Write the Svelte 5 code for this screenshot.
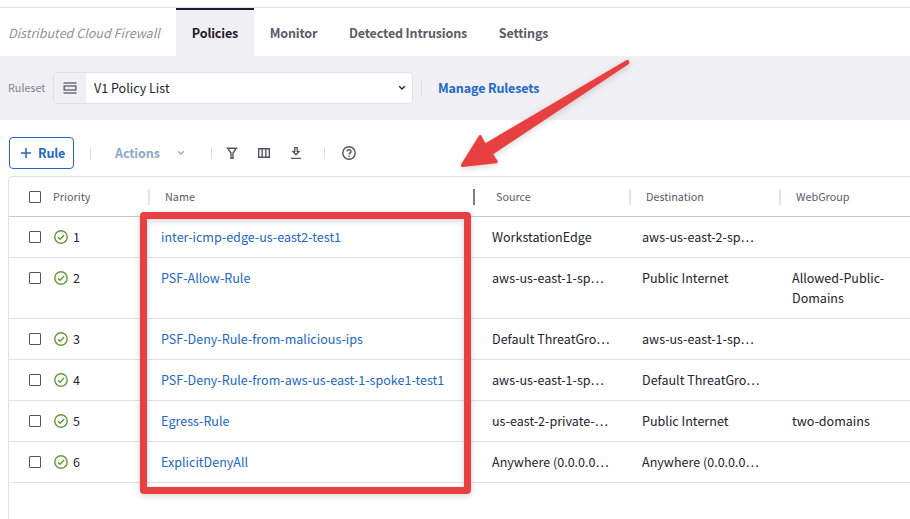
<script>
  const tabs = [
    { label: 'Policies', active: true, width: 78 },
    { label: 'Monitor', width: 79 },
    { label: 'Detected Intrusions', width: 150 },
    { label: 'Settings', width: 81 }
  ];
  const columns = ['Name', 'Source', 'Destination', 'WebGroup'];
  const rules = [
    { name: 'inter-icmp-edge-us-east2-test1', source: 'WorkstationEdge', destination: 'aws-us-east-2-sp…', group: '' },
    { name: 'PSF-Allow-Rule', source: 'aws-us-east-1-sp…', destination: 'Public Internet', group: 'Allowed-Public-Domains' },
    { name: 'PSF-Deny-Rule-from-malicious-ips', source: 'Default ThreatGro…', destination: 'aws-us-east-1-sp…', group: '' },
    { name: 'PSF-Deny-Rule-from-aws-us-east-1-spoke1-test1', source: 'aws-us-east-1-sp…', destination: 'Default ThreatGro…', group: '' },
    { name: 'Egress-Rule', source: 'us-east-2-private-…', destination: 'Public Internet', group: 'two-domains' },
    { name: 'ExplicitDenyAll', source: 'Anywhere (0.0.0.0…', destination: 'Anywhere (0.0.0.0…', group: '' }
  ];
</script>

<div class="page">
  <nav class="tabs">
    <em class="product">Distributed Cloud Firewall</em>
    {#each tabs as tab}
      <div class="tab" class:active={tab.active} style="width: {tab.width}px"><span>{tab.label}</span></div>
    {/each}
  </nav>

  <section class="ruleset">
    <span class="label">Ruleset</span>
    <div class="select">
      <div class="prefix">
        <svg width="14" height="12" viewBox="0 0 14 12" fill="none" stroke="#6d6c73" stroke-width="1.3">
          <path d="M.5 1h13M.5 11h13" />
          <path d="M1.2 3.9h11.6v4.2H1.2z" stroke-width="1.5" />
        </svg>
      </div>
      <span class="value">V1 Policy List</span>
      <svg class="caret" width="8" height="6" viewBox="0 0 8 6" fill="none" stroke="#24222e" stroke-width="1.4"><path d="M1.2 1.3 4 4l2.8-2.7" /></svg>
    </div>
    <i class="rule-line"></i>
    <b class="manage">Manage Rulesets</b>
  </section>

  <section class="toolbar">
    <div class="add">
      <svg width="10" height="10" viewBox="0 0 10 10" stroke="#2167c5" stroke-width="1.5"><path d="M0 5h10M5 0v10" /></svg>
      <b>Rule</b>
    </div>
    <i class="bar b1"></i>
    <b class="actions">Actions</b>
    <svg class="down" width="8" height="6" viewBox="0 0 8 6" fill="none" stroke="#8fa8c4" stroke-width="1.3"><path d="M1.2 1.3 4 4l2.8-2.7" /></svg>
    <i class="bar b2"></i>
    <svg class="filter" width="12" height="12" viewBox="0 0 12 12" fill="none" stroke="#55545e" stroke-width="1.4"><path d="M1.6 1.2h8.8L7 6v5.2H5V6z" /></svg>
    <svg class="cols" width="12" height="10" viewBox="0 0 12 10" fill="none" stroke="#55545e" stroke-width="1.4"><path d="M.7.7h10.6v8.6H.7zM4.2.7v8.6M7.8.7v8.6" /></svg>
    <svg class="download" width="10" height="12" viewBox="0 0 10 12" fill="none" stroke="#55545e" stroke-width="1.3"><path d="M0 11.3h10M3.8.7h2.4v3.8h1.9L5 7.7 1.9 4.5h1.9z" /></svg>
    <i class="bar b3"></i>
    <svg class="help" width="14" height="14" viewBox="0 0 14 14" fill="none" stroke="#55545e" stroke-width="1.4"><circle cx="7" cy="7" r="6.2" /><path d="M5 5.6c0-1.1.8-1.9 2-1.9s2 .8 2 1.8C9 6.8 7 6.9 7 8.5M7 9.7v1.3" /></svg>
  </section>

  <section class="table">
    <div class="row head">
      <div class="priority"><i class="box"></i><span class="title">Priority</span></div>
      {#each columns as column, i}
        <div class="cell c{i}"><span class="title">{column}</span></div>
      {/each}
    </div>
    {#each rules as rule, i}
      <div class="row">
        <div class="priority">
          <i class="box"></i>
          <svg width="14" height="14" viewBox="0 0 14 14" fill="none" stroke="#649a38" stroke-width="1.4"><circle cx="7" cy="7" r="6.2" /><path d="m4 7.2 2.1 2.1 4-4.2" /></svg>
          <span>{i + 1}</span>
        </div>
        <div class="cell c0 link">{rule.name}</div>
        <div class="cell c1">{rule.source}</div>
        <div class="cell c2">{rule.destination}</div>
        <div class="cell c3">{rule.group}</div>
      </div>
    {/each}
  </section>

  <div class="highlight"></div>
  <svg class="arrow" width="190" height="130" viewBox="450 50 190 130">
    <path d="M462.3 165.4 480.2 136.6 484.8 145.2 627.4 61.4 628 62.7 491.2 153.7 496.3 161.7z" />
  </svg>
</div>

<style>
  :global(body) { margin: 0; background: #fff; }
  .page {
    position: relative;
    box-sizing: border-box;
    width: 910px;
    height: 519px;
    padding-top: 7px;
    overflow: hidden;
    display: flex;
    flex-direction: column;
    font: 12.55px/20px 'Noto Sans CJK SC', 'Noto Sans', sans-serif;
    color: #24222e;
    background: #fff;
  }
  svg { display: block; flex: none; }
  i { flex: none; }
  b { letter-spacing: -0.14px; }
  .tabs { display: flex; height: 48px; border-top: 1px solid #dfdfe4; flex: none; }
  .product { width: 168px; padding-left: 8px; line-height: 49px; color: #908f95; white-space: nowrap; }
  .tab {
    box-sizing: border-box;
    display: flex;
    justify-content: center;
    border-top: 2px solid transparent;
    line-height: 45px;
    font-weight: 700;
    letter-spacing: -0.16px;
    color: #5c5b66;
    white-space: nowrap;
  }
  .tab.active { background: #f0eff4; border-color: #1b1930; color: #1e1b30; }
  .ruleset { display: flex; align-items: center; height: 64px; padding-left: 8px; background: #f0eff4; flex: none; }
  .label { width: 45px; margin-bottom: 2px; font-size: 10.8px; color: #85848a; }
  .select {
    box-sizing: border-box;
    display: flex;
    align-items: center;
    width: 360px;
    height: 32px;
    border: 1px solid #dfdfe4;
    border-radius: 4px;
    background: #fff;
    overflow: hidden;
  }
  .prefix { display: flex; align-items: center; justify-content: center; width: 32px; height: 30px; background: #f0eff4; }
  .value { flex: 1; padding-left: 8px; }
  .caret { margin-right: 6px; }
  .rule-line { width: 1px; height: 16px; margin: 0 16px 0 8px; background: #dcdce2; }
  .manage { color: #2167c5; }
  .toolbar { display: flex; align-items: center; box-sizing: border-box; height: 56px; padding: 10px 0 0 9px; flex: none; }
  .add {
    box-sizing: border-box;
    display: flex;
    align-items: center;
    gap: 7px;
    width: 65px;
    height: 32px;
    padding-left: 11px;
    border: 1px solid #2167c5;
    border-radius: 4px;
    color: #2167c5;
  }
  .bar { width: 1px; height: 12px; background: #dcdce2; }
  .b1 { margin: 0 24px 0 16px; }
  .actions { width: 62px; color: #8fa8c4; }
  .b2 { margin: 0 14px 0 26px; }
  .cols { margin: 0 21px 0 20px; }
  .b3 { margin: 0 17px 0 23px; }
  .table {
    flex: 1;
    margin-left: 8px;
    border: solid #dfdfe4;
    border-width: 1px 0 0 1px;
    border-radius: 5px 0 0 0;
  }
  .row { display: flex; padding: 10px 0; border-bottom: 1px solid #dfdfe4; }
  .row.head { height: 19px; line-height: 20px; border-color: #c8c7d4; font-size: 10.8px; color: #5c5b66; }
  .priority { display: flex; align-items: center; width: 132px; height: 20px; padding-left: 20px; flex: none; box-sizing: border-box; }
  .box { box-sizing: border-box; width: 12px; height: 12px; margin-right: 13px; border: 1.5px solid #55545e; border-radius: 1px; }
  .priority svg { margin-right: 5px; }
  .title { margin-bottom: 2px; }
  .head .priority span { margin-left: -1px; }
  .cell { box-sizing: border-box; padding-left: 20px; flex: none; }
  .c0 { width: 331px; }
  .c1, .c2, .c3 { width: 150px; }
  .head .cell { display: flex; align-items: center; padding-left: 0; height: 20px; }
  .head .cell::before { content: ''; width: 2px; height: 16px; margin-right: 15px; background: #e4e3ea; }
  .head .c0 { margin-left: 7px; width: 325px; }
  .head .c1 { width: 156px; }
  .head .c1::before { margin-right: 21px; background: #7e7d88; }
  .c3 { padding-right: 20px; }
  .link { color: #2167c5; }
  .highlight {
    position: absolute;
    box-sizing: border-box;
    left: 140px;
    top: 212px;
    width: 331px;
    height: 282px;
    border: 7px solid #e84040;
    border-radius: 4px;
    filter: drop-shadow(0 2px 3px rgb(0 0 0 / 0.16));
  }
  .arrow { position: absolute; left: 450px; top: 50px; filter: drop-shadow(0 2px 3px rgb(0 0 0 / 0.16)); }
  .arrow path { fill: #e84040; stroke: #e84040; stroke-width: 3; stroke-linejoin: round; }
</style>
